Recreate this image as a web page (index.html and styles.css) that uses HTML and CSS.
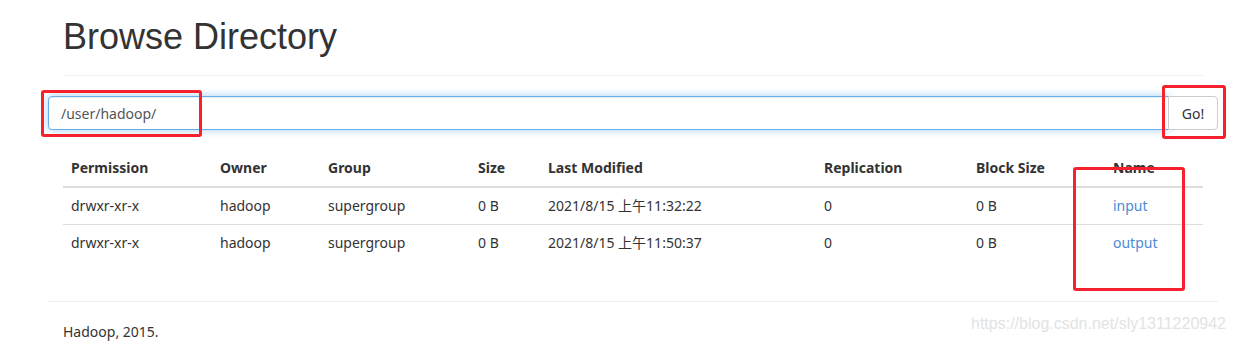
FILE: index.html
```html
<!DOCTYPE html>
<html lang="en">
<head>
  <meta charset="UTF-8" />
  <title>Browsing HDFS</title>
  <link rel="stylesheet" href="styles.css">
</head>
<body>
  <div class="container">
    <div class="page-header">
      <h1>Browse Directory</h1>
    </div>
    <form class="input-group">
      <input class="path-input" type="text" value="/user/hadoop/">
      <button class="go-btn" type="button">Go!</button>
    </form>
    <table class="listing">
      <thead>
        <tr>
          <th class="c-perm">Permission</th>
          <th class="c-owner">Owner</th>
          <th class="c-group">Group</th>
          <th class="c-size">Size</th>
          <th class="c-mod">Last Modified</th>
          <th class="c-rep">Replication</th>
          <th class="c-block">Block Size</th>
          <th class="c-name">Name</th>
        </tr>
      </thead>
      <tbody>
        <tr>
          <td>drwxr-xr-x</td>
          <td>hadoop</td>
          <td>supergroup</td>
          <td>0 B</td>
          <td>2021/8/15 上午11:32:22</td>
          <td>0</td>
          <td>0 B</td>
          <td><a href="#">input</a></td>
        </tr>
        <tr>
          <td>drwxr-xr-x</td>
          <td>hadoop</td>
          <td>supergroup</td>
          <td>0 B</td>
          <td>2021/8/15 上午11:50:37</td>
          <td>0</td>
          <td>0 B</td>
          <td><a href="#">output</a></td>
        </tr>
      </tbody>
    </table>
    <hr class="footer-rule">
    <div class="footer">
      <p>Hadoop, 2015.</p>
    </div>
  </div>

  <!-- red annotation boxes drawn over the screenshot -->
  <div class="mark mark-path"></div>
  <div class="mark mark-go"></div>
  <div class="mark mark-name"></div>
  <div class="watermark">https://blog.csdn.net/sly1311220942</div>
</body>
</html>
```

FILE: styles.css
```css
* {
  box-sizing: border-box;
}
body {
  margin: 0;
  font-family: 'Noto Sans', 'Noto Sans CJK SC', sans-serif;
  font-size: 14px;
  line-height: 20px;
  color: #333;
  background-color: #fff;
}
.container {
  width: 1170px;
  margin-left: 48px;
}
.page-header {
  margin: 0 15px;
  padding-bottom: 18px;
  border-bottom: 1px solid #eee;
}
h1 {
  margin: 0;
  padding-top: 17px;
  font-family: 'Liberation Sans', Arial, sans-serif;
  font-size: 36px;
  font-weight: 500;
  line-height: 40px;
}
.input-group {
  display: flex;
  margin: 20px 0 20px;
}
.path-input {
  flex: 1;
  height: 34px;
  padding: 6px 12px;
  font-family: inherit;
  font-size: 14px;
  color: #555;
  border: 1px solid #66afe9;
  border-radius: 4px 0 0 4px;
  outline: none;
  box-shadow: inset 0 1px 1px rgba(0, 0, 0, 0.075), 0 0 8px rgba(102, 175, 233, 0.6);
}
.go-btn {
  width: 50px;
  height: 34px;
  margin-left: -1px;
  padding: 6px 0;
  font-family: inherit;
  font-size: 14px;
  color: #333;
  background-color: #fff;
  border: 1px solid #ccc;
  border-radius: 0 4px 4px 0;
  cursor: pointer;
}
.listing {
  width: 1140px;
  margin: 0 15px 20px;
  border-collapse: collapse;
  text-align: left;
}
.listing th,
.listing td {
  padding: 8px;
  vertical-align: top;
}
.listing th {
  font-weight: bold;
  border-bottom: 2px solid #ddd;
}
.listing tbody tr + tr td {
  border-top: 1px solid #ddd;
}
.c-perm { width: 149px; }
.c-owner { width: 108px; }
.c-group { width: 150px; }
.c-size { width: 70px; }
.c-mod { width: 276px; }
.c-rep { width: 152px; }
.c-block { width: 137px; }
.listing a {
  color: #4a8cd3;
  text-decoration: none;
}
.footer-rule {
  margin: 40px 0 20px;
  border: 0;
  border-top: 1px solid #eee;
}
.footer p {
  margin: 0 15px;
}
.mark {
  position: absolute;
  border: 3px solid #f5222d;
  border-radius: 3px;
  z-index: 10;
}
.mark-path {
  left: 41px;
  top: 90px;
  width: 161px;
  height: 47px;
}
.mark-go {
  left: 1162px;
  top: 85px;
  width: 64px;
  height: 54px;
}
.mark-name {
  left: 1073px;
  top: 167px;
  width: 112px;
  height: 124px;
}
.watermark {
  position: absolute;
  left: 971px;
  top: 314px;
  font-family: 'Liberation Sans', Arial, sans-serif;
  font-size: 16px;
  line-height: 20px;
  color: #e3e3e3;
  white-space: nowrap;
}
```
